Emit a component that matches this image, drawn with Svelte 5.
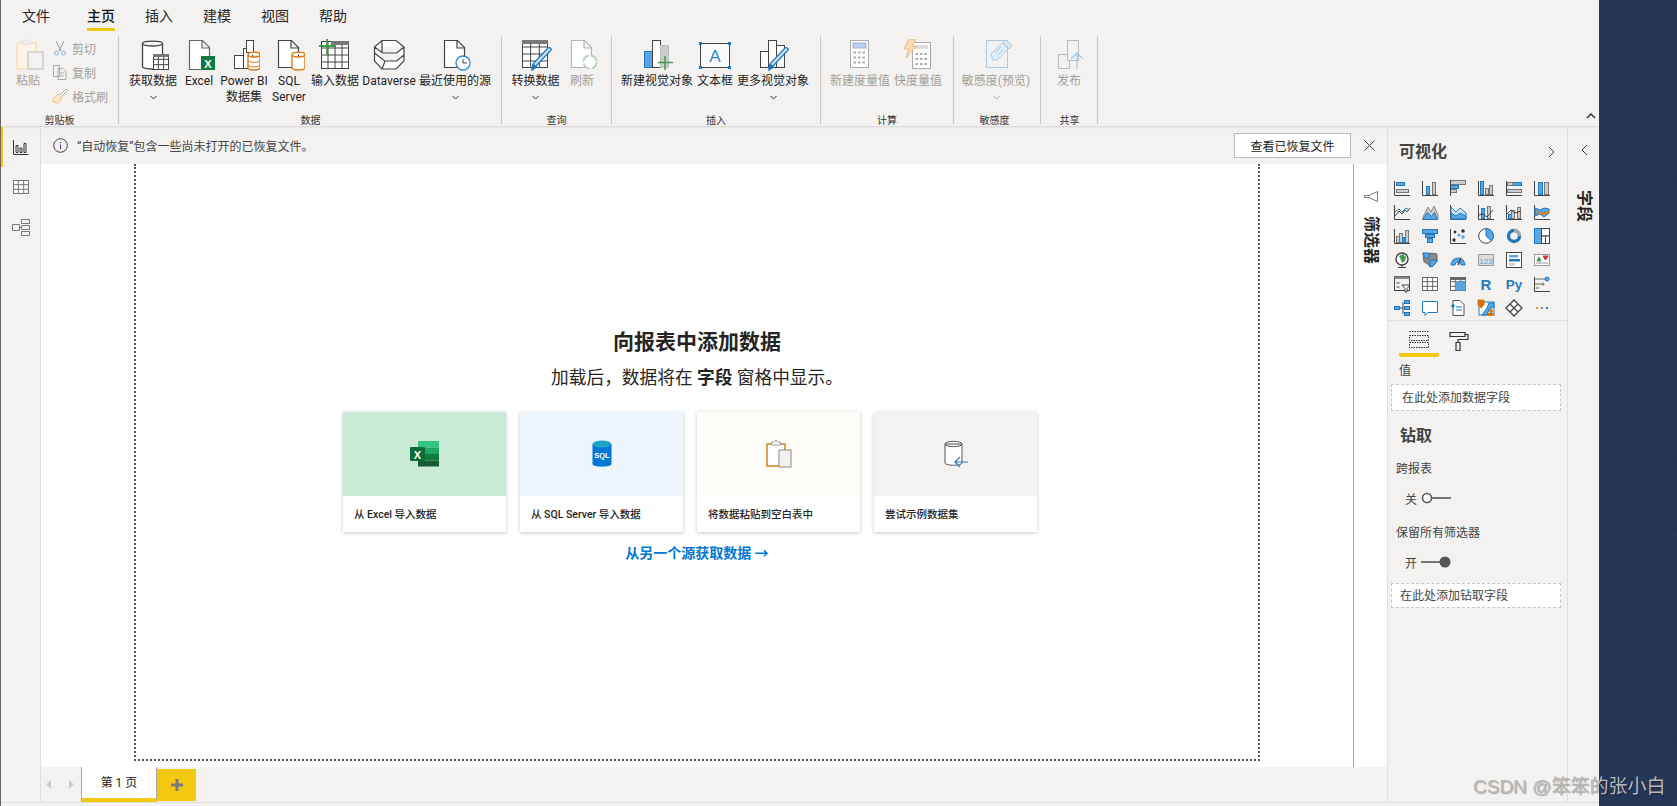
<script>
  const D = '#444';
  const B = '#5aa5e3';
  const S = '#1e78bd';
  const G = '#777';

  const r = (x, y, w, h, f = 'none', s = 'none') =>
    `<rect x="${x}" y="${y}" width="${w}" height="${h}" fill="${f}" stroke="${s}"/>`;
  const p = (d, s = D, f = 'none', w = 1) =>
    `<path d="${d}" stroke="${s}" fill="${f}" stroke-width="${w}"/>`;
  const t = (x, y, size, fill, str, weight = 700) =>
    `<text x="${x}" y="${y}" font-size="${size}" font-weight="${weight}" fill="${fill}" text-anchor="middle" font-family="Liberation Sans, sans-serif">${str}</text>`;
  const axis = p('M.5 1v14.5H16');
  const cyl = (x, y, w, h, s) =>
    p(`M${x} ${y + 2.5}c0-3.3 ${w}-3.3 ${w} 0v${h - 5}c0 3.3-${w} 3.3-${w} 0zM${x} ${y + 2.5}c0 3.3 ${w} 3.3 ${w} 0`, s, '#fff', 1.3);
  const cyl2 = (x, y, w, h, s) =>
    cyl(x, y, w, h, s) + p(`M${x} ${y + h * 0.45}c0 3 ${w} 3 ${w} 0M${x} ${y + h * 0.7}c0 3 ${w} 3 ${w} 0`, s);
  const grid = (x, y, w, h, c, cols = 3, rows = 3) => {
    let d = '';
    for (let i = 1; i < cols; i++) d += `M${x + (w * i) / cols} ${y}v${h}`;
    for (let i = 1; i < rows; i++) d += `M${x} ${y + (h * i) / rows}h${w}`;
    return r(x + 0.5, y + 0.5, w - 1, h - 1, '#fff', c) + p(d, c);
  };
  const pencil = (x, y) =>
    p(`M${x} ${y}l-15 16-4 4 1-6 15-16c2-1 4 1 3 2z`, S, '#cfe4f6', 1.3) + p(`M${x - 19} ${y + 20}l1-6 4 3z`, S, S);
  const doc = (x, y, w, h, c) =>
    p(`M${x + 0.5} ${y + 0.5}h${w - 8}l7 7v${h - 8}h-${w - 1}zM${x + w - 8} ${y + 1}v7h7`, c, '#fff', 1.2);

  const ribbonIcons = {
    getData: cyl(5.5, 2, 20, 28, D) + grid(16, 15, 16, 16, D, 3, 3) + r(16, 15, 16, 3, '#777'),
    excel: doc(6, 1, 21, 30, '#666') + r(18, 17, 14, 14, '#107c41') + t(25, 28.5, 11, '#fff', 'X'),
    dataset: r(6.5, 16.5, 9, 13, '#fff', D) + r(15.5, 9.5, 9, 20, '#fff', D) + r(18.5, 1.5, 7, 12, '#fff', D) + cyl2(20, 13, 12, 18, '#d9730d'),
    sql: doc(5, 1, 21, 28, D) + cyl(19, 13, 13, 18, '#d9730d'),
    enter: grid(2, 2, 28, 28, D, 4, 4) + r(12, 2, 18, 4, '#777') + p('M8 0v16M0 7h17', '#3d9a4f', 'none', 1.8),
    dataverse: p('M9 1.5h14l8 6.500v14l-8 8H9l-7.500-8V8zM1.500 8l8 6h14l7.500-6M1.500 14l10 8h12l7.500-6M9 1.500V14M9 30l3-8', D, '#fff', 1.2),
    recent: doc(5, 1, 21, 28, D) + `<circle cx="24" cy="24" r="7" fill="#fff" stroke="#2b88d8" stroke-width="1.3"/>` + p('M24 20v4h4', D),
    transform: grid(2, 1, 26, 28, D, 3, 4) + r(2, 1, 26, 4, '#777') + pencil(31, 11),
    refresh: doc(5, 1, 21, 28, '#b5b5b5') + `<circle cx="24" cy="23" r="6.5" fill="#fff" stroke="#a9cfb0" stroke-width="1.6" stroke-dasharray="8 2.2"/>`,
    newVisual: r(3.5, 12.5, 8, 16, B, S) + r(11.5, 1.5, 8, 27, '#fff', D) + r(19.5, 6.5, 8, 22, '#ccc', '#bbb') + p('M24 17v14M17 23.5h15', '#3d9a4f', 'none', 1.5),
    textBox: r(1.5, 4.5, 29, 24, '#fafafa', D) + r(0, 3, 3, 3, S) + r(29, 3, 3, 3, S) + r(0, 27, 3, 3, S) + r(29, 27, 3, 3, S) + t(16, 23, 17, '#2b88d8', 'A', 400),
    moreVisual: r(3.5, 12.5, 8, 16, '#fff', D) + r(11.5, 1.5, 8, 27, '#fff', D) + r(19.5, 6.5, 8, 22, '#fff', D) + pencil(31, 11),
    newMeasure: r(6.5, 1.5, 18, 27, '#fff', '#aaa') + r(9, 4, 13, 5, '#b5d4ee', '#aac') + p('M9.5 13.5h2.5m2 0h2.5m2 0h2.5M9.5 18.5h2.5m2 0h2.5m2 0h2.5M9.5 23.5h2.5m2 0h2.5m2 0h2.5', '#aaa', 'none', 2),
    quickMeasure: r(10.5, 3.5, 18, 26, '#fff', '#aaa') + r(13, 6, 13, 4, '#ddd') + p('M13.5 15h2.5m2 0h2.5m2 0h2.5M13.5 20h2.5m2 0h2.5m2 0h2.5M13.5 25h2.5m2 0h2.5m2 0h2.5', '#aaa', 'none', 2) + p('M7 0h7l-4 7h4L4 19l3-9H2z', '#f0b67c', '#fbdcb8'),
    sensitivity: r(6.5, 1.5, 21, 27, '#f3f2f1', '#a8cce8') + p('M13 21l-2-6 11-11 6 6-11 11z', '#a8cce8', '#e4eef7') + p('M23 3l3-2 6 6-3 3z', '#a8cce8', '#d8e8f5') + p('M15 14l6-6M17 17l6-6', '#a8cce8'),
    publish: r(5.5, 15.5, 11, 14, '#f3f2f1', '#bbb') + r(14.5, 1.5, 11, 20, '#f3f2f1', '#bbb') + p('M24 30V14M18 20l6-6 6 6', '#a8cce8', 'none', 1.3),
    paste: r(5, 4, 19, 26, '#fdf4e6', '#f3d6ac') + p('M10 4V2h3l1-2 2 2h3v3h-9z', '#ddd', '#f3f2f1') + r(16, 13, 15, 17, '#f3f2f1', '#bbb')
  };

  const rg = (x, y, w, h) => r(x, y, w, h, B, S);
  const gy = (x, y, w, h) => r(x, y, w, h, '#ccc', G);
  const vizIcons = [
    axis + rg(2.5, 2.5, 8, 3) + gy(2.5, 9.5, 12, 3),
    axis + rg(4.5, 6.5, 3, 8) + gy(10.5, 2.5, 3, 12),
    gy(.5, .5, 15, 4) + rg(.5, 5.5, 8, 3) + gy(.5, 9.5, 6, 3) + p('M.5 0v16', D),
    axis + rg(2.5, 1.5, 3, 13) + gy(7.5, 8.5, 3, 6) + gy(11.5, 5.5, 3, 9),
    axis + rg(6.500, 2.5, 9, 3) + gy(1.5, 2.5, 5, 3) + gy(1.5, 9.5, 14, 3),
    axis + rg(4.5, 2.5, 4, 12) + gy(10.5, 2.5, 4, 12),
    axis + p('M1 12l4-5 3 3 3-4 2 2 3-4', D) + p('M1 8l4-3 3 3 4-4 3 2', S),
    p('M1 15v-2L6 3l3 5 3-6 4 9v4z', '#888', '#ccc') + p('M.5 15.5l5-7 4 4 3-4 3 7z', S, B),
    axis + p('M1 3l5 5 4-4 6 5v6H1z', S, '#cfe4f6') + p('M1 9l5 3 4-3 6 3v3H1z', S, B),
    axis + rg(3.5, 4.5, 3, 10) + gy(9.5, 2.5, 3, 12) + p('M1 11l4-1 4 3 6-7', D),
    axis + rg(2.5, 10.5, 3, 4) + gy(5.5, 6.5, 3, 8) + gy(11.5, 3.5, 3, 11) + p('M1 10l4-4 4 3 6-2', D),
    axis + p('M1 4l5 2 4-2 5 1v4l-5 4-4-3-5 2z', S, B) + p('M3 8l4 2 4-1 4-1', '#e07b1a', 'none', 2),
    axis + gy(2.5, 8.5, 3, 6) + gy(5.5, 5.5, 3, 9) + rg(8.5, 9.5, 2, 5) + gy(11.5, 2.5, 3, 12),
    r(.5, 1.5, 15, 4, B, S) + r(3.5, 6.5, 9, 3, B, S) + r(5.5, 10.5, 5, 4, B, S),
    axis + `<circle cx="13" cy="3" r="1.8" fill="#333"/><circle cx="9" cy="7" r="1.6" fill="${B}"/><circle cx="13" cy="9" r="1.8" fill="${B}"/><circle cx="5" cy="4" r="1.4" fill="#333"/><circle cx="4" cy="12" r="1.7" fill="#333"/>`,
    `<circle cx="8" cy="8" r="7.3" fill="#fff" stroke="${D}"/>` + p('M8 8V.7A7.3 7.3 0 0 1 13.5 13z', S, B),
    `<circle cx="8" cy="8" r="5.5" fill="none" stroke="${S}" stroke-width="3.4"/><path d="M8 2.5A5.5 5.5 0 0 1 13.5 8" fill="none" stroke="#aaa" stroke-width="3.4"/>`,
    r(.5, .5, 7, 15, B, S) + r(7.5, .5, 8, 7.5, '#fff', D) + r(7.5, 8, 4, 7.5, '#fff', D) + r(11.5, 8, 4, 7.5, '#fff', D),
    `<circle cx="8" cy="7" r="6" fill="#fff" stroke="${D}" stroke-width="1.4"/><path d="M5 4l4-2 3 3-1 4-3 2-1-3z" fill="#3d9a4f"/>` + p('M4 15.5h8M8 13v2', D),
    p('M1 1l5 1 3-1 6 1v7l-4 5-3 1-2-3-4-2z', '#666', '#888') + p('M8 8h7v1l-4 5-3 1z', S, B) + p('M1 1h6v5H3z', S, B),
    p('M1 13a7 7 0 0 1 14 0h-4a3 3 0 0 0-6 0z', S, B) + p('M8 13l3-7', D, 'none', 1.4),
    r(.5, 2.5, 15, 11, '#ddd', '#999') + t(8, 11.5, 8, '#5aa5e3', '123', 400),
    r(.5, .5, 15, 15, '#fff', D) + r(3, 3, 9, 2.5, B) + r(3, 7, 11, 2.5, S) + r(3, 11, 6, 2.5, '#ccc'),
    r(.5, 2.5, 15, 11, '#fff', '#999') + p('M3 9l2-4 2 4z', '#3d9a4f', '#3d9a4f') + p('M9 4h5l-2.5 4z', '#d13438', '#d13438') + p('M2 11h12', '#999'),
    r(.5, .5, 15, 14, '#f3f2f1', D) + r(.5, .5, 15, 2.5, '#888') + r(2.5, 6, 3, 2, '#999') + r(2.5, 10, 3, 2, '#999') + p('M8 9h8l-3 3.5V16h-2v-3.5z', D, '#fff'),
    grid(0, 1, 16, 14, '#666', 3, 3),
    grid(0, 1, 16, 14, '#666', 3, 3) + r(5.5, 5.5, 10, 9, B) + r(0, 1, 16, 3, '#666'),
    t(8, 14, 15, '#2b7cb9', 'R'),
    t(8, 13, 13.5, '#2b7cb9', 'Py'),
    axis + p('M1 3h11M1 8h7', '#666') + `<circle cx="13" cy="3" r="2" fill="${B}" stroke="${S}"/><circle cx="9" cy="8" r="1.5" fill="#888"/>` + p('M2 12h3', '#666'),
    r(.5, 6.5, 5, 3, B, S) + p('M6 8h3M9 2v12', D) + r(10.5, .5, 5, 3, B, S) + r(10.5, 6.5, 5, 3, B, S) + r(10.5, 12.5, 5, 3, B, S),
    p('M.5 1.5h15v11H6l-3 3v-3H.5z', S, '#fff'),
    p('M3 .5h7l4 4v11H3z', '#555', '#fff') + `<circle cx="3" cy="6" r="1.8" fill="${S}"/>` + p('M6 7h6M6 10h6', S),
    r(1, 2, 15, 13, '#fff', S) + p('M4 15l5-7 2-5h5v4l-5 2-2 6z', S, B) + p('M0 0h6v5l-3 3-3-3z', '#d9730d', '#d9730d') + `<circle cx="13" cy="11" r="2" fill="#d9730d"/><rect x="10" y="13" width="5" height="3" fill="#d9730d"/>`,
    p('M8 0l8 8-8 8-8-8zM4.5 4.5l7 7M11.5 4.5l-7 7', '#444', '#fff', 1.3),
    `<circle cx="3" cy="8" r="1" fill="#d9730d"/><circle cx="8" cy="8" r="1" fill="#2b7cb9"/><circle cx="13" cy="8" r="1" fill="#444"/>`
  ];

  const groups = [
    { label: '数据', cls: 'data', items: [
      { w: 52, lines: ['获取数据'], icon: 'getData', more: true },
      { w: 40, lines: ['Excel'], icon: 'excel' },
      { w: 50, lines: ['Power BI', '数据集'], icon: 'dataset' },
      { w: 40, lines: ['SQL', 'Server'], icon: 'sql' },
      { w: 52, lines: ['输入数据'], icon: 'enter' },
      { w: 56, lines: ['Dataverse'], icon: 'dataverse' },
      { w: 76, lines: ['最近使用的源'], icon: 'recent', more: true }
    ] },
    { label: '查询', cls: 'query', items: [
      { w: 53, lines: ['转换数据'], icon: 'transform', more: true },
      { w: 40, lines: ['刷新'], icon: 'refresh', off: true }
    ] },
    { label: '插入', cls: 'insert', items: [
      { w: 76, lines: ['新建视觉对象'], icon: 'newVisual' },
      { w: 40, lines: ['文本框'], icon: 'textBox' },
      { w: 76, lines: ['更多视觉对象'], icon: 'moreVisual', more: true }
    ] },
    { label: '计算', cls: 'calc', items: [
      { w: 64, lines: ['新建度量值'], icon: 'newMeasure', off: true },
      { w: 52, lines: ['快度量值'], icon: 'quickMeasure', off: true }
    ] },
    { label: '敏感度', cls: 'sens', items: [
      { w: 80, lines: ['敏感度(预览)'], icon: 'sensitivity', off: true, more: true }
    ] },
    { label: '共享', cls: 'share', items: [
      { w: 40, lines: ['发布'], icon: 'publish', off: true }
    ] }
  ];

  const tabs = ['文件', '主页', '插入', '建模', '视图', '帮助'];
  const cards = [
    { text: '从 Excel 导入数据', cls: 'green', icon: 'excel' },
    { text: '从 SQL Server 导入数据', cls: 'blue', icon: 'sql' },
    { text: '将数据粘贴到空白表中', cls: 'cream', icon: 'paste' },
    { text: '尝试示例数据集', cls: 'grey', icon: 'sample' }
  ];
</script>

<div class="app">
  <div class="main">
    <div class="ribbon">
      <nav class="tabs">
        {#each tabs as tab, i}
          <span class="tab" class:active={i === 1}>{tab}</span>
        {/each}
      </nav>
      <div class="groups">
        <section class="group clip">
          <div class="items">
            <div class="btn off" style="width:40px">
              <svg class="ico" width="32" height="32" viewBox="0 0 32 32">{@html ribbonIcons.paste}</svg>
              <span>粘贴</span>
            </div>
            <div class="small">
              <div class="row">
                <svg width="16" height="16" viewBox="0 0 16 16"><path d="M4 1l5 10M12 1L7 11" stroke="#999" fill="none"/><circle cx="4.5" cy="13" r="2" fill="none" stroke="#8ab4d8"/><circle cx="11.5" cy="13" r="2" fill="none" stroke="#8ab4d8"/></svg>
                <span>剪切</span>
              </div>
              <div class="row">
                <svg width="16" height="16" viewBox="0 0 16 16"><path d="M1.5 1.5h6v11h-6zM6 4.5h5l3 3v8H6z" stroke="#aaa" fill="#f3f2f1"/><path d="M8 9h4M8 12h4" stroke="#aaa"/></svg>
                <span>复制</span>
              </div>
              <div class="row">
                <svg width="16" height="16" viewBox="0 0 16 16"><path d="M1 11l5-5 4 4-4 5-5-1z" fill="#fbe5c8" stroke="#e8c594"/><path d="M8 7l6-6 1.500 1.500-6 6" fill="#fff" stroke="#aaa"/></svg>
                <span>格式刷</span>
              </div>
            </div>
          </div>
          <div class="group-label">剪贴板</div>
        </section>
        {#each groups as g}
          <section class="group {g.cls}">
            <div class="items">
              {#each g.items as item}
                <div class="btn" class:off={item.off} style="width:{item.w}px">
                  <svg class="ico" width="32" height="32" viewBox="0 0 32 32">{@html ribbonIcons[item.icon]}</svg>
                  {#each item.lines as line}
                    <span>{line}</span>
                  {/each}
                  {#if item.more}
                    <svg class="chev" width="7" height="16" viewBox="0 0 7 16"><path d="M.5 7l3 3 3-3" fill="none" stroke={item.off ? '#aaa' : '#333'}/></svg>
                  {/if}
                </div>
              {/each}
            </div>
            <div class="group-label">{g.label}</div>
          </section>
        {/each}
        <svg class="collapse" width="10" height="6" viewBox="0 0 10 6"><path d="M1 5l4-4 4 4" fill="none" stroke="#333" stroke-width="1.500"/></svg>
      </div>
    </div>

    <div class="body">
      <aside class="nav">
        <div class="nav-item current">
          <svg width="16" height="16" viewBox="0 0 16 16" fill="none" stroke="#333"><path d="M.5 1v14.500H15.500M3 6.500h2v7H3zM7 9h2v4.500H7zM11 4.500h2v9h-2z"/></svg>
        </div>
        <div class="nav-item">
          <svg width="16" height="16" viewBox="0 0 16 16">{@html grid(0, 1, 16, 14, '#777', 3, 3)}</svg>
        </div>
        <div class="nav-item">
          <svg width="18" height="18" viewBox="0 0 18 18" fill="none" stroke="#777"><path d="M.5 6.500h7v6h-7zM9.500 1.500h8v4h-8zM9.500 7.500h8v4h-8zM9.500 13.500h8v4h-8zM7.500 9.500h2"/></svg>
        </div>
      </aside>

      <div class="center">
        <div class="infobar">
          <svg width="15" height="15" viewBox="0 0 15 15"><circle cx="7.500" cy="7.500" r="6.800" fill="none" stroke="#444"/><path d="M7.500 6.500v4.500M7.500 4v1.300" stroke="#5c2d91"/></svg>
          <span class="info-text">“自动恢复”包含一些尚未打开的已恢复文件。</span>
          <button class="recover">查看已恢复文件</button>
          <svg class="close" width="11" height="11" viewBox="0 0 11 11"><path d="M.5.500l10 10M10.500.500l-10 10" stroke="#444" fill="none"/></svg>
        </div>

        <div class="work">
          <div class="canvas">
            <div class="page">
              <h1>向报表中添加数据</h1>
              <p class="sub">加载后，数据将在 <b>字段</b> 窗格中显示。</p>
              <div class="cards">
                {#each cards as c}
                  <div class="card">
                    <div class="card-img {c.cls}">
                      <svg width="32" height="32" viewBox="0 0 32 32">
                        {#if c.icon === 'excel'}
                          <rect x="9" y="3" width="21" height="6.500" fill="#33c481"/>
                          <rect x="9" y="9.500" width="21" height="6.500" fill="#21a366"/>
                          <rect x="9" y="16" width="21" height="6.500" fill="#107c41"/>
                          <rect x="9" y="22.500" width="21" height="6" fill="#185c37"/>
                          <rect x="1" y="9" width="15" height="14" rx="1" fill="#0e6b38"/>
                          <text x="8.500" y="20.500" font-size="11" font-weight="700" fill="#fff" text-anchor="middle" font-family="Liberation Sans, sans-serif">X</text>
                        {:else if c.icon === 'sql'}
                          <path d="M6.500 6v20c0 3.500 19 3.500 19 0V6z" fill="#0078d4"/>
                          <ellipse cx="16" cy="6" rx="9.500" ry="3.500" fill="#1fa5c9"/>
                          <text x="16" y="20" font-size="7.500" font-weight="700" fill="#fff" text-anchor="middle" font-family="Liberation Sans, sans-serif">SQL</text>
                        {:else if c.icon === 'paste'}
                          <rect x="4" y="6" width="18" height="22" fill="#fff" stroke="#d98a2b" stroke-width="1.600"/>
                          <path d="M8.500 7V4h3l1.500-2 1.500 2h3v3z" fill="#fff" stroke="#999"/>
                          <rect x="16" y="12" width="12" height="17" fill="#f3f2f1" stroke="#888"/>
                        {:else}
                          <path d="M5 6v19c0 3 17 3 17 0V6zM5 6c0-3.500 17-3.500 17 0s-17 3.500-17 0z" fill="#fff" stroke="#555"/>
                          <path d="M28 24H15M20 19l-5 5 5 5" fill="none" stroke="#2b7cb9" stroke-width="1.200"/>
                        {/if}
                      </svg>
                    </div>
                    <div class="card-text">{c.text}</div>
                  </div>
                {/each}
              </div>
              <div class="another">从另一个源获取数据 →</div>
            </div>
          </div>
          <aside class="filters">
            <svg width="14" height="11" viewBox="0 0 14 11"><path d="M13.500.500v10L5 6.500H.5v-2H5z" fill="#fff" stroke="#777"/></svg>
            <span class="side-title">筛选器</span>
          </aside>
        </div>

        <div class="pages">
          <div class="arrows">
            <svg width="6" height="9" viewBox="0 0 6 9"><path d="M5 0v9L0 4.500z" fill="#ccc"/></svg>
            <svg width="6" height="9" viewBox="0 0 6 9"><path d="M1 0v9l5-4.500z" fill="#ccc"/></svg>
          </div>
          <div class="page-tab">第 1 页</div>
          <div class="add">
            <svg width="12" height="12" viewBox="0 0 12 12"><path d="M6 0v12M0 6h12" stroke="#7a7a7a" stroke-width="3"/></svg>
          </div>
        </div>
      </div>

      <aside class="viz">
        <header class="viz-head">
          <h2>可视化</h2>
          <svg width="8" height="12" viewBox="0 0 8 12"><path d="M1 1l5 5-5 5" fill="none" stroke="#444"/></svg>
        </header>
        <div class="viz-grid">
          {#each vizIcons as icon}
            <div class="viz-cell">
              <svg width="16" height="16" viewBox="0 0 16 16">{@html icon}</svg>
            </div>
          {/each}
        </div>
        <div class="viz-tabs">
          <div class="viz-tab on">
            <svg width="20" height="20" viewBox="0 0 20 20" fill="none" stroke="#333" stroke-dasharray="1.500 1"><path d="M.5 2.500h19M.5 6.500h19v5H.5zM.5 13.500h19v5H.5z"/></svg>
          </div>
          <div class="viz-tab">
            <svg width="20" height="20" viewBox="0 0 20 20" fill="none" stroke="#333" stroke-width="1.200"><path d="M1 1.500h15v4H1zM16 3.500h3v5H9v3M7 11.500h4v8H7z"/></svg>
          </div>
        </div>
        <div class="field-label first">值</div>
        <div class="drop">在此处添加数据字段</div>
        <h3>钻取</h3>
        <div class="field-label second">跨报表</div>
        <div class="toggle">
          <span>关</span>
          <svg width="30" height="12" viewBox="0 0 30 12"><circle cx="6" cy="6" r="4.500" fill="#fff" stroke="#555" stroke-width="1.600"/><path d="M11 6h19" stroke="#555" stroke-width="1.600"/></svg>
        </div>
        <div class="field-label third">保留所有筛选器</div>
        <div class="toggle">
          <span>开</span>
          <svg width="30" height="12" viewBox="0 0 30 12"><path d="M0 6h20" stroke="#555" stroke-width="1.600"/><circle cx="24" cy="6" r="5.500" fill="#555"/></svg>
        </div>
        <div class="drop last">在此处添加钻取字段</div>
      </aside>

      <aside class="fields">
        <svg width="8" height="12" viewBox="0 0 8 12"><path d="M7 1L2 6l5 5" fill="none" stroke="#444"/></svg>
        <span class="side-title">字段</span>
      </aside>
    </div>
    <div class="statusbar"></div>
  </div>
  <div class="backdrop"></div>
  <div class="watermark">CSDN @笨笨的张小白</div>
</div>

<style>
  :global(body) {
    margin: 0;
    background: #243557;
  }

  .app {
    position: relative;
    display: flex;
    width: 1677px;
    height: 806px;
    overflow: hidden;
    font-family: Roboto, "Noto Sans CJK SC", sans-serif;
    font-size: 12px;
    color: #252423;
  }

  .main {
    width: 1598px;
    border-left: 1px solid #666;
    display: flex;
    flex-direction: column;
    background: #f3f2f1;
  }

  .backdrop {
    flex: 1;
    background-color: #243557;
    background-image: repeating-linear-gradient(45deg, rgba(255,255,255,.025) 0 1px, transparent 1px 3px),
      repeating-linear-gradient(-45deg, rgba(0,0,0,.06) 0 1px, transparent 1px 3px);
  }

  .watermark {
    position: absolute;
    left: 1473px;
    top: 775px;
    font-size: 19px;
    line-height: 24px;
    white-space: nowrap;
    color: #b8b8b8;
    text-shadow: 1px 1px 1px rgba(0,0,0,.3);
    font-family: "Liberation Sans", "Noto Sans CJK SC", sans-serif;
  }

  /* ribbon */
  .ribbon {
    height: 126px;
    border-bottom: 1px solid #ddd;
    box-shadow: 0 1px 2px rgba(0,0,0,.06);
  }

  .tabs {
    height: 36px;
    display: flex;
    gap: 30px;
    padding-left: 21px;
    box-sizing: border-box;
  }

  .tab {
    height: 31px;
    box-sizing: border-box;
    padding-top: 5px;
    font-size: 14px;
    line-height: 22px;
  }

  .tab:first-child {
    margin-right: 7px;
  }

  .tab.active {
    font-weight: 500;
    color: #111;
    border-bottom: 3px solid #f2c811;
  }

  .groups {
    position: relative;
    display: flex;
    height: 90px;
  }

  .collapse {
    position: absolute;
    left: 1585px;
    top: 77px;
  }

  .group {
    display: flex;
    flex-direction: column;
    box-sizing: border-box;
    background: linear-gradient(#c8c6c4, #c8c6c4) right top / 1px 88px no-repeat;
  }

  .clip { width: 118px; padding-left: 7px; }
  .data { width: 383px; padding-left: 8px; }
  .query { width: 110px; padding-left: 7px; }
  .insert { width: 209px; padding-left: 7px; }
  .calc { width: 133px; padding-left: 7px; }
  .sens { width: 87px; padding-left: 2px; }
  .share { width: 57px; padding-left: 8px; }

  .items {
    flex: 1;
    display: flex;
  }

  .btn {
    display: flex;
    flex-direction: column;
    align-items: center;
    padding-top: 3px;
    line-height: 16px;
    white-space: nowrap;
  }

  .ico {
    margin-bottom: 2px;
    flex-shrink: 0;
  }

  .btn.off, .small {
    color: #a19f9d;
  }

  .chev {
    flex-shrink: 0;
  }

  .small {
    margin-left: 4px;
  }

  .row {
    height: 24px;
    display: flex;
    align-items: center;
    gap: 4px;
  }

  .group-label {
    height: 12px;
    line-height: 14px;
    font-size: 10px;
    text-align: center;
    color: #333;
    padding-right: 8px;
  }

  /* body */
  .body {
    flex: 1;
    display: flex;
    min-height: 0;
  }

  .nav {
    width: 39px;
    border-right: 1px solid #e1dfdd;
  }

  .nav-item {
    height: 40px;
    display: flex;
    align-items: center;
    justify-content: center;
    border-left: 2px solid transparent;
    padding-right: 2px;
  }

  .nav-item.current {
    border-left-color: #f2c811;
  }

  .center {
    width: 1346px;
    display: flex;
    flex-direction: column;
  }

  .infobar {
    height: 37px;
    display: flex;
    align-items: center;
    padding-left: 12px;
    box-sizing: border-box;
  }

  .info-text {
    margin-left: 9px;
    flex: 1;
    color: #444;
  }

  .recover {
    width: 117px;
    height: 25px;
    padding: 0;
    background: #fff;
    border: 1px solid #bdbbb9;
    font: inherit;
    color: #222;
  }

  .close {
    margin: 0 12px 0 13px;
  }

  .work {
    flex: 1;
    display: flex;
    min-height: 0;
  }

  .canvas {
    flex: 1;
    background: #fff;
    padding-left: 93px;
  }

  .page {
    width: 1126px;
    height: 597px;
    box-sizing: border-box;
    border: 2px dotted #555;
    border-top: none;
    display: flex;
    flex-direction: column;
    align-items: center;
    padding-top: 162px;
  }

  h1 {
    margin: 0;
    font-size: 21px;
    line-height: 32px;
    font-weight: 700;
    color: #252423;
  }

  .sub {
    margin: 6px 0 0;
    font-size: 17.7px;
    line-height: 28px;
    color: #252423;
  }

  .cards {
    display: flex;
    gap: 14px;
    margin: 20px 14px 0 0;
  }

  .card {
    width: 163px;
    background: #fff;
    box-shadow: 0 1px 4px rgba(0,0,0,.22);
  }

  .card-img {
    height: 84px;
    display: flex;
    align-items: center;
    justify-content: center;
  }

  .green { background: #c9ead6; }
  .blue { background: #eff5fc; }
  .cream { background: #fefdf8; }
  .grey { background: #f3f2f1; }

  .card-text {
    height: 36px;
    line-height: 38px;
    padding-left: 11px;
    font-size: 10.5px;
    font-weight: 500;
    color: #252423;
  }

  .another {
    margin-top: 11px;
    font-size: 14px;
    line-height: 20px;
    font-weight: 600;
    color: #0078d4;
  }

  .filters {
    width: 33px;
    border-left: 1px solid #a6a6a6;
    background: #fff;
    display: flex;
    flex-direction: column;
    align-items: center;
    padding-top: 27px;
  }

  .side-title {
    margin-top: 14px;
    writing-mode: vertical-rl;
    text-orientation: sideways;
    font-size: 16px;
    line-height: 18px;
    font-weight: 700;
    color: #252423;
  }

  .pages {
    height: 35px;
    display: flex;
  }

  .arrows {
    width: 40px;
    display: flex;
    align-items: center;
    gap: 16px;
    padding-left: 5px;
    box-sizing: border-box;
  }

  .page-tab {
    width: 76px;
    box-sizing: border-box;
    background: #fff;
    border-left: 1px solid #aaa;
    border-right: 1px solid #aaa;
    border-bottom: 4px solid #f2c811;
    text-align: center;
    line-height: 33px;
    font-size: 12px;
  }

  .add {
    width: 39px;
    height: 32px;
    margin-top: 2px;
    background: #f2c811;
    display: flex;
    align-items: center;
    justify-content: center;
  }

  /* visualizations pane */
  .viz {
    width: 179px;
    border-left: 1px solid #e1dfdd;
    border-right: 1px solid #e1dfdd;
    color: #444;
  }

  .viz-head {
    height: 49px;
    box-sizing: border-box;
    display: flex;
    align-items: center;
    justify-content: space-between;
    padding: 0 11px 0 11px;
  }

  h2 {
    margin: 0;
    font-size: 16px;
    line-height: 22px;
    font-weight: 700;
    color: #444;
  }

  .viz-grid {
    display: grid;
    grid-template-columns: repeat(6, 28px);
    grid-auto-rows: 24px;
    height: 144px;
    border-bottom: 1px solid #e1dfdd;
  }

  .viz-cell {
    display: flex;
    align-items: center;
    justify-content: center;
  }

  .viz-cell svg {
    overflow: visible;
  }

  .viz-tabs {
    display: flex;
    height: 36px;
    padding-left: 11px;
  }

  .viz-tab {
    width: 40px;
    height: 36px;
    box-sizing: border-box;
    display: flex;
    align-items: center;
    justify-content: center;
    padding-top: 3px;
  }

  .viz-tab.on {
    border-bottom: 4px solid #f2c811;
    border-radius: 0 0 3px 3px;
  }

  .field-label {
    line-height: 16px;
    padding-left: 8px;
    color: #444;
  }

  .field-label.first { margin-top: 6px; padding-left: 11px; }
  .field-label.second { margin-top: 14px; }
  .field-label.third { margin-top: 17px; }

  .drop {
    width: 170px;
    height: 27px;
    margin: 5px 0 0 3px;
    box-sizing: border-box;
    background: #fff;
    border: 1px dashed #c8c6c4;
    padding-left: 10px;
    line-height: 27px;
    color: #444;
  }

  .drop.last {
    height: 25px;
    margin-top: 11px;
    padding-left: 8px;
    line-height: 25px;
  }

  h3 {
    margin: 14px 0 0 12px;
    font-size: 16px;
    line-height: 22px;
    font-weight: 700;
    color: #444;
  }

  .toggle {
    height: 20px;
    margin-top: 11px;
    padding-left: 17px;
    display: flex;
    align-items: center;
    gap: 4px;
  }

  .fields {
    flex: 1;
    display: flex;
    flex-direction: column;
    align-items: center;
    padding-top: 17px;
  }

  .fields .side-title {
    margin-top: 34px;
  }

  .statusbar {
    height: 3px;
    border-top: 1px solid #e1dfdd;
  }
</style>
